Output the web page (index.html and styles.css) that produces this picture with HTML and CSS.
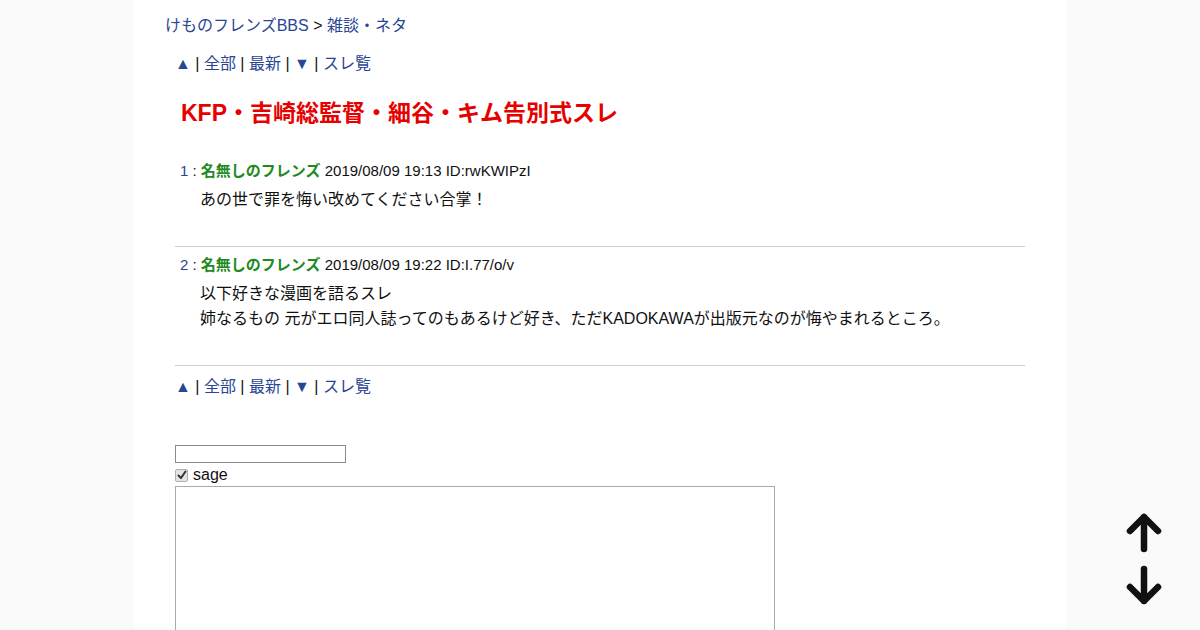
FILE: index.html
```html
<!DOCTYPE html>
<html lang="ja">
<head>
<meta charset="utf-8">
<title>KFP・吉崎総監督・細谷・キム告別式スレ</title>
<link rel="stylesheet" href="styles.css">
</head>
<body>
<div class="page">
  <div class="crumb"><a href="#">けものフレンズBBS</a> &gt; <a href="#">雑談・ネタ</a></div>
  <div class="inner">
    <div class="nav"><a href="#">▲</a> | <a href="#">全部</a> | <a href="#">最新</a> | <a href="#">▼</a> | <a href="#">スレ覧</a></div>
  </div>
  <h1 class="title">KFP・吉崎総監督・細谷・キム告別式スレ</h1>
  <div class="inner">
    <div class="post">
      <div class="head"><a href="#" class="num">1</a> : <span class="name">名無しのフレンズ</span> 2019/08/09 19:13 ID:rwKWIPzI</div>
      <div class="body">あの世で罪を悔い改めてください合掌！</div>
    </div>
    <hr class="sep">
    <div class="post">
      <div class="head"><a href="#" class="num">2</a> : <span class="name">名無しのフレンズ</span> 2019/08/09 19:22 ID:I.77/o/v</div>
      <div class="body">以下好きな漫画を語るスレ<br>姉なるもの 元がエロ同人誌ってのもあるけど好き、ただKADOKAWAが出版元なのが悔やまれるところ。</div>
    </div>
    <hr class="sep">
    <div class="nav nav2"><a href="#">▲</a> | <a href="#">全部</a> | <a href="#">最新</a> | <a href="#">▼</a> | <a href="#">スレ覧</a></div>
    <form class="form">
      <input class="namebox" type="text">
      <label class="sage"><span class="check"><svg width="10" height="10" viewBox="0 0 10 10"><path d="M1.5 5.5 L4 8 L8.5 1.5" fill="none" stroke="#333" stroke-width="2" stroke-linecap="round" stroke-linejoin="round"/></svg></span>sage</label>
      <textarea class="msg"></textarea>
    </form>
  </div>
</div>
<div class="scroll">
  <svg class="arrow" width="40" height="44" viewBox="0 0 40 44"><path d="M20 38 V6 M6 20 L20 6 L34 20" fill="none" stroke="#111" stroke-width="6.5" stroke-linecap="round" stroke-linejoin="round"/></svg>
  <svg class="arrow" width="40" height="44" viewBox="0 0 40 44"><path d="M20 6 V38 M6 24 L20 38 L34 24" fill="none" stroke="#111" stroke-width="6.5" stroke-linecap="round" stroke-linejoin="round"/></svg>
</div>
</body>
</html>
```
FILE: styles.css
```css
html, body {
  margin: 0;
  padding: 0;
}
body {
  background: #fafafa;
  color: #111;
  font-family: "Liberation Sans", "Noto Sans CJK JP", sans-serif;
  font-size: 16px;
}
a {
  color: #2a4594;
  text-decoration: none;
}
.page {
  box-sizing: border-box;
  width: 932px;
  min-height: 630px;
  margin: 0 auto;
  background: #fff;
  padding: 16px 31px 0;
}
.crumb {
  line-height: 20px;
}
.inner {
  margin: 0 10px;
}
.nav {
  margin-top: 18px;
  line-height: 20px;
}
.title {
  margin: 23px 0 0 16px;
  font-size: 23px;
  line-height: 32px;
  color: #e60000;
  font-weight: bold;
}
.post {
  padding: 0 0 0 5px;
}
.inner > .post:first-child {
  margin-top: 32px;
}
.head {
  font-size: 15px;
  line-height: 20px;
}
.name {
  color: #1f8a1f;
  font-weight: bold;
}
.body {
  margin: 6px 0 0 20px;
  line-height: 25px;
}
.sep {
  border: 0;
  border-top: 1px solid #cfcfcf;
  margin: 34px 0 8px;
  height: 0;
}
.nav2 {
  margin-top: 11px;
}
.form {
  display: flex;
  flex-direction: column;
  align-items: flex-start;
  margin-top: 48px;
}
.namebox {
  box-sizing: border-box;
  width: 171px;
  height: 18px;
  border: 1px solid #8a8a8a;
  padding: 0;
  margin: 0;
}
.sage {
  display: flex;
  align-items: center;
  gap: 5px;
  line-height: 22px;
  height: 22px;
  margin-top: 1px;
}
.check {
  box-sizing: border-box;
  width: 13px;
  height: 13px;
  border: 1px solid #b0b0b0;
  border-radius: 2px;
  background: #e4e4e4;
  display: flex;
  align-items: center;
  justify-content: center;
}
.msg {
  box-sizing: border-box;
  width: 600px;
  height: 200px;
  border: 1px solid #aaa;
  margin: 0;
  padding: 0;
  resize: none;
}
.scroll {
  position: fixed;
  right: 36px;
  top: 511px;
  display: flex;
  flex-direction: column;
  gap: 8px;
}
.arrow {
  display: block;
}
```
